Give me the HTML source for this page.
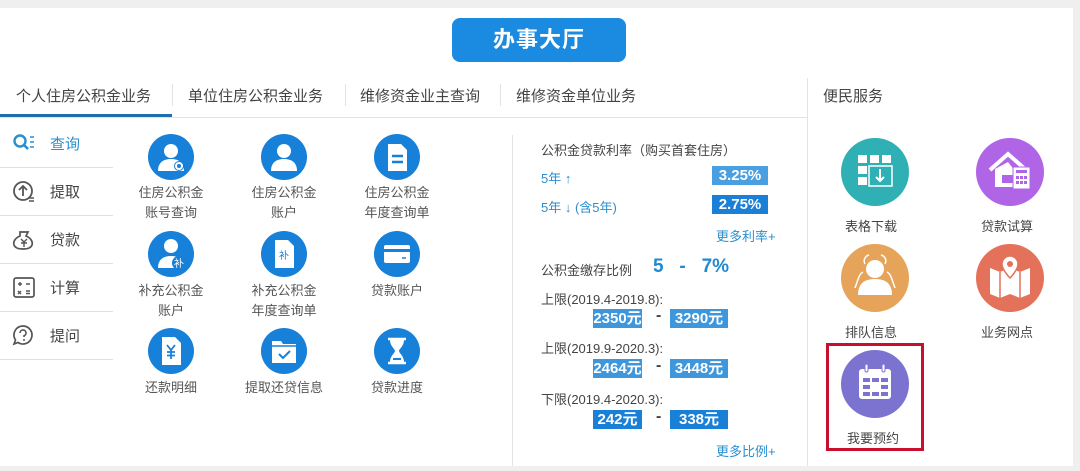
<!DOCTYPE html>
<html><head><meta charset="utf-8"><style>
*{margin:0;padding:0;box-sizing:border-box}
body{width:1080px;height:471px;background:#efefef;font-family:"Liberation Sans","Noto Sans CJK SC",sans-serif;position:relative;overflow:hidden;color:#444}
.panel{position:absolute;left:0;top:8px;width:1073px;height:458px;background:#fff}
.a{position:absolute;white-space:nowrap}
.title{left:452px;top:18px;width:174px;height:44px;background:#1a8be0;border-radius:8px;color:#fff;font-size:22px;font-weight:bold;text-align:center;line-height:44px;letter-spacing:1px}
.tab{top:85px;font-size:15px;color:#444}
.sep{width:1px;background:#e3e3e3}
.menu{left:0;width:113px;height:48px;border-bottom:1px solid #e0e0e0;font-size:15px}
.menu span{position:absolute;left:50px;top:13px}
.menu svg{position:absolute;left:12px;top:12px}
.ic{position:absolute;width:46px;height:46px;border-radius:50%;background:#1780d8}
.ic svg{position:absolute;left:0;top:0}
.lb{position:absolute;width:120px;text-align:center;font-size:13px;color:#555;line-height:20px}
.r{font-size:13px;color:#444}
.bd{position:absolute;color:#fff;font-weight:bold;font-size:15px;text-align:center;line-height:19px;height:19px}
.sv{position:absolute;width:68px;height:68px;border-radius:50%}
.sv svg{position:absolute;left:0;top:0}
</style></head><body>
<div class="panel"></div>
<div class="a title">办事大厅</div>
<div class="a tab" style="left:16px">个人住房公积金业务</div>
<div class="a tab" style="left:188px">单位住房公积金业务</div>
<div class="a tab" style="left:360px">维修资金业主查询</div>
<div class="a tab" style="left:516px">维修资金单位业务</div>
<div class="a tab" style="left:823px">便民服务</div>
<div class="a sep" style="left:172px;top:84px;height:22px"></div>
<div class="a sep" style="left:345px;top:84px;height:22px"></div>
<div class="a sep" style="left:500px;top:84px;height:22px"></div>
<div class="a sep" style="left:807px;top:78px;height:388px"></div>
<div class="a" style="left:0;top:117px;width:807px;height:1px;background:#e3e3e3"></div>
<div class="a" style="left:0;top:114px;width:172px;height:3px;background:#1f6fb0"></div>
<div class="a sep" style="left:512px;top:135px;height:331px"></div>

<div class="a menu" style="top:120px;color:#2a8fcf"><svg width="26" height="22" viewBox="0 0 26 22"><circle cx="8" cy="9" r="5.5" fill="none" stroke="#2a8fcf" stroke-width="2.4"/><path d="M12 13l4 4" stroke="#2a8fcf" stroke-width="2.6"/><path d="M18 5h4M18 10h4M18 15h4" stroke="#2a8fcf" stroke-width="1.6"/></svg><span>查询</span></div>
<div class="a menu" style="top:168px"><svg width="26" height="24" viewBox="0 0 26 24"><circle cx="11" cy="11" r="9" fill="none" stroke="#555" stroke-width="1.8"/><path d="M11 16V6M7 10l4-4 4 4" fill="none" stroke="#555" stroke-width="1.8"/><path d="M17 18h5M17 21h5" stroke="#555" stroke-width="1.5"/></svg><span>提取</span></div>
<div class="a menu" style="top:216px"><svg width="26" height="24" viewBox="0 0 26 24"><path d="M8 4h8l-2 4c5 2 7 6 6 9-1 3-5 4-9 4s-8-1-9-4c-1-3 1-7 6-9z" fill="none" stroke="#555" stroke-width="1.7"/><path d="M9 11l3 3 3-3M12 14v5M9 15h6" fill="none" stroke="#555" stroke-width="1.4"/></svg><span>贷款</span></div>
<div class="a menu" style="top:264px"><svg width="26" height="24" viewBox="0 0 26 24"><rect x="2" y="2" width="20" height="19" rx="2" fill="none" stroke="#555" stroke-width="1.7"/><path d="M6 8h4M8 6v4M14 8h4M6 15l3 3M9 15l-3 3M14 15h4M14 17.5h4" stroke="#555" stroke-width="1.4"/></svg><span>计算</span></div>
<div class="a menu" style="top:312px"><svg width="26" height="24" viewBox="0 0 26 24"><path d="M11 2a9 9 0 1 1-5 16.5L2 20l1.5-4A9 9 0 0 1 11 2z" fill="none" stroke="#555" stroke-width="1.7"/><path d="M8 9a3 3 0 1 1 4 2.8V13" fill="none" stroke="#555" stroke-width="1.6"/><circle cx="12" cy="16" r="1" fill="#555"/></svg><span>提问</span></div>

<!-- grid -->
<div class="ic" style="left:148px;top:134px"><svg width="46" height="46"><circle cx="23" cy="17" r="7" fill="#fff"/><path d="M10 37c0-9 6-12 13-12s13 3 13 12z" fill="#fff"/><circle cx="31" cy="32" r="5" fill="#1780d8"/><circle cx="31" cy="32" r="3" fill="none" stroke="#fff" stroke-width="2"/></svg></div>
<div class="ic" style="left:261px;top:134px"><svg width="46" height="46"><circle cx="23" cy="17" r="7" fill="#fff"/><path d="M10 37c0-9 6-12 13-12s13 3 13 12z" fill="#fff"/></svg></div>
<div class="ic" style="left:374px;top:134px"><svg width="46" height="46"><path d="M14 10h13l6 6v21H14z" fill="#fff"/><path d="M18 22h11M18 28h11" stroke="#1780d8" stroke-width="2.5"/></svg></div>
<div class="lb" style="left:111px;top:183px">住房公积金<br>账号查询</div>
<div class="lb" style="left:224px;top:183px">住房公积金<br>账户</div>
<div class="lb" style="left:337px;top:183px">住房公积金<br>年度查询单</div>

<div class="ic" style="left:148px;top:231px"><svg width="46" height="46"><circle cx="23" cy="15" r="7" fill="#fff"/><path d="M10 37c0-9 6-12 13-12s13 3 13 12z" fill="#fff"/><circle cx="31" cy="32" r="7" fill="#1780d8"/><text x="31" y="36" font-size="10" fill="#fff" text-anchor="middle" font-family="Noto Sans CJK SC">补</text></svg></div>
<div class="ic" style="left:261px;top:231px"><svg width="46" height="46"><path d="M14 9h13l6 6v22H14z" fill="#fff"/><text x="23" y="28" font-size="10" fill="#1780d8" text-anchor="middle" font-family="Noto Sans CJK SC">补</text></svg></div>
<div class="ic" style="left:374px;top:231px"><svg width="46" height="46"><rect x="10" y="14" width="26" height="18" rx="2" fill="#fff"/><rect x="10" y="18" width="26" height="3" fill="#1780d8"/><path d="M28 27h4" stroke="#1780d8" stroke-width="1.5"/></svg></div>
<div class="lb" style="left:111px;top:281px">补充公积金<br>账户</div>
<div class="lb" style="left:224px;top:281px">补充公积金<br>年度查询单</div>
<div class="lb" style="left:337px;top:281px">贷款账户</div>

<div class="ic" style="left:148px;top:328px"><svg width="46" height="46"><path d="M14 9h13l6 6v22H14z" fill="#fff"/><path d="M19 17l4 5 4-5M23 22v9M19 24h8M19 27.5h8" fill="none" stroke="#1780d8" stroke-width="1.8"/></svg></div>
<div class="ic" style="left:261px;top:328px"><svg width="46" height="46"><path d="M11 13h9l2 3h13v19H11z" fill="#fff"/><path d="M11 18h24" stroke="#1780d8" stroke-width="1.5"/><path d="M18 26l4 4 7-7" fill="none" stroke="#1780d8" stroke-width="2"/></svg></div>
<div class="ic" style="left:374px;top:328px"><svg width="46" height="46"><path d="M14 11h18M14 35h18" stroke="#fff" stroke-width="2.5"/><path d="M16 12h14c0 6-5 9-5 11s5 5 5 11H16c0-6 5-9 5-11s-5-5-5-11z" fill="#fff"/><path d="M19 31h8" stroke="#1780d8" stroke-width="2"/></svg></div>
<div class="lb" style="left:111px;top:378px">还款明细</div>
<div class="lb" style="left:224px;top:378px">提取还贷信息</div>
<div class="lb" style="left:337px;top:378px">贷款进度</div>

<!-- rates -->
<div class="a r" style="left:541px;top:140px">公积金贷款利率（购买首套住房）</div>
<div class="a r" style="left:541px;top:168px;color:#2a8fcf">5年 ↑</div>
<div class="a bd" style="left:712px;top:166px;width:56px;background:#4a9fe0">3.25%</div>
<div class="a r" style="left:541px;top:197px;color:#2a8fcf">5年 ↓ (含5年)</div>
<div class="a bd" style="left:712px;top:195px;width:56px;background:#1a7fd6">2.75%</div>
<div class="a r" style="left:716px;top:226px;color:#2a8fcf">更多利率+</div>
<div class="a r" style="left:541px;top:260px">公积金缴存比例</div>
<div class="a" style="left:653px;top:256px;font-size:19px;font-weight:bold;color:#1f8ad0">5&nbsp;&nbsp;&nbsp;-&nbsp;&nbsp;&nbsp;7%</div>
<div class="a r" style="left:541px;top:289px">上限(2019.4-2019.8):</div>
<div class="a bd" style="left:593px;top:309px;width:49px;background:#3e97dc">2350元</div>
<div class="a" style="left:656px;top:307px;font-weight:bold;color:#444">-</div>
<div class="a bd" style="left:670px;top:309px;width:58px;background:#3e97dc">3290元</div>
<div class="a r" style="left:541px;top:338px">上限(2019.9-2020.3):</div>
<div class="a bd" style="left:593px;top:359px;width:49px;background:#3e97dc">2464元</div>
<div class="a" style="left:656px;top:357px;font-weight:bold;color:#444">-</div>
<div class="a bd" style="left:670px;top:359px;width:58px;background:#3e97dc">3448元</div>
<div class="a r" style="left:541px;top:389px">下限(2019.4-2020.3):</div>
<div class="a bd" style="left:593px;top:410px;width:49px;background:#1a7fd6">242元</div>
<div class="a" style="left:656px;top:408px;font-weight:bold;color:#444">-</div>
<div class="a bd" style="left:670px;top:410px;width:58px;background:#1a7fd6">338元</div>
<div class="a r" style="left:716px;top:441px;color:#2a8fcf">更多比例+</div>

<!-- services -->
<div class="sv" style="left:841px;top:138px;background:#2fb0b4"><svg width="68" height="68"><g fill="#fff"><rect x="17" y="17" width="9" height="8"/><rect x="29" y="17" width="9" height="8"/><rect x="41" y="17" width="9" height="8"/><rect x="17" y="28" width="9" height="8"/><rect x="17" y="39" width="9" height="8"/></g><rect x="28" y="28" width="23" height="20" fill="none" stroke="#fff" stroke-width="1.5"/><path d="M39 31v12M35 39l4 4 4-4" fill="none" stroke="#fff" stroke-width="2"/></svg></div>
<div class="sv" style="left:976px;top:138px;background:#b064e6"><svg width="68" height="68"><path d="M14 32l18-16 18 16" fill="none" stroke="#fff" stroke-width="4"/><path d="M19 31v18h20V33L32 24z" fill="#fff"/><rect x="26" y="37" width="12" height="8" fill="#b064e6"/><rect x="37" y="29" width="17" height="22" fill="#fff" stroke="#b064e6" stroke-width="1"/><g fill="#b064e6"><rect x="40" y="32" width="11" height="3"/><rect x="40" y="38" width="3" height="3"/><rect x="44" y="38" width="3" height="3"/><rect x="48" y="38" width="3" height="3"/><rect x="40" y="43" width="3" height="3"/><rect x="44" y="43" width="3" height="3"/><rect x="48" y="43" width="3" height="3"/></g></svg></div>
<div class="a" style="left:845px;top:216px;font-size:13px;color:#444">表格下载</div>
<div class="a" style="left:981px;top:216px;font-size:13px;color:#444">贷款试算</div>
<div class="sv" style="left:841px;top:244px;background:#e6a35a"><svg width="68" height="68"><circle cx="34" cy="25" r="9" fill="#fff"/><path d="M17 51c0-12 7-16 17-16s17 4 17 16z" fill="#fff"/><path d="M22 28c-4 2-5 8-8 16M46 28c4 2 5 8 8 16M24 20c-2-4 0-8 4-9M44 20c2-4 0-8-4-9" fill="none" stroke="#fff" stroke-width="1.5"/></svg></div>
<div class="sv" style="left:976px;top:244px;background:#e4725a"><svg width="68" height="68"><path d="M14 24l10 4 10-4 10 4 10-4v26l-10 4-10-4-10 4-10-4z" fill="#fff"/><path d="M24 28v26M44 28v26" stroke="#e4725a" stroke-width="1.5"/><path d="M34 12a8 8 0 0 1 8 8c0 6-8 14-8 14s-8-8-8-14a8 8 0 0 1 8-8z" fill="#fff" stroke="#e4725a" stroke-width="1.5"/><circle cx="34" cy="20" r="3" fill="#e4725a"/></svg></div>
<div class="a" style="left:845px;top:322px;font-size:13px;color:#444">排队信息</div>
<div class="a" style="left:981px;top:322px;font-size:13px;color:#444">业务网点</div>
<div class="a" style="left:826px;top:343px;width:98px;height:108px;border:3px solid #c8102e"></div>
<div class="sv" style="left:841px;top:350px;background:#7c73d0"><svg width="68" height="68"><rect x="18" y="19" width="32" height="30" rx="3" fill="#fff"/><rect x="24" y="14" width="3" height="8" rx="1.5" fill="#fff" stroke="#7c73d0" stroke-width="1"/><rect x="41" y="14" width="3" height="8" rx="1.5" fill="#fff" stroke="#7c73d0" stroke-width="1"/><g fill="#7c73d0"><rect x="22" y="28" width="7" height="4"/><rect x="31" y="28" width="7" height="4"/><rect x="40" y="28" width="7" height="4"/><rect x="22" y="35" width="7" height="4"/><rect x="40" y="35" width="7" height="4"/><rect x="22" y="42" width="7" height="4"/><rect x="31" y="42" width="7" height="4"/><rect x="40" y="42" width="7" height="4"/></g></svg></div>
<div class="a" style="left:847px;top:428px;font-size:13px;color:#444">我要预约</div>
</body></html>
